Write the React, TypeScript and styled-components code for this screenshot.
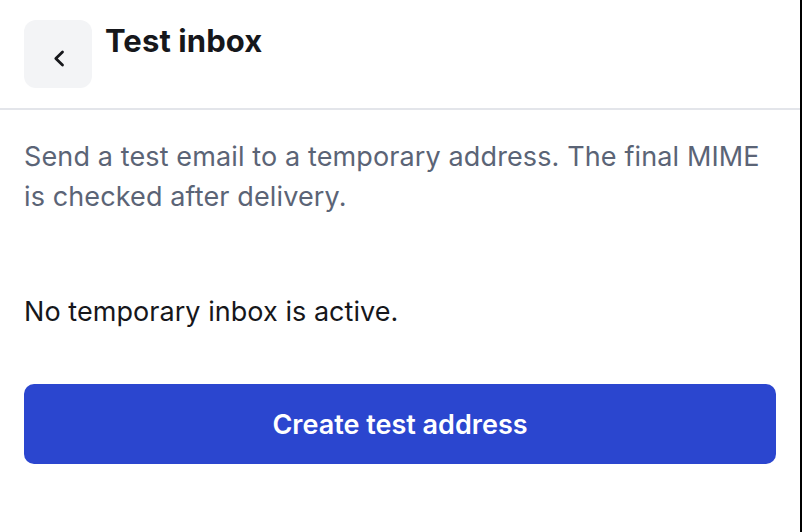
import React from 'react';
import styled, { createGlobalStyle } from 'styled-components';

const GlobalStyle = createGlobalStyle`
  html, body {
    margin: 0;
    padding: 0;
    background: #fff;
  }
  body {
    font-family: Inter, "Noto Sans", "Liberation Sans", sans-serif;
    -webkit-font-smoothing: antialiased;
  }
`;

const Screen = styled.div`
  width: 800px;
  height: 532px;
  border-right: 2px solid #000;
  background: #fff;
  display: flex;
  flex-direction: column;
`;

const Header = styled.header`
  display: flex;
  align-items: flex-start;
  gap: 13px;
  padding: 20px 24px;
  border-bottom: 2px solid #e3e5ea;
`;

const BackButton = styled.button`
  width: 68px;
  height: 68px;
  flex-shrink: 0;
  border: none;
  border-radius: 12px;
  background: #f3f4f6;
  display: flex;
  align-items: center;
  justify-content: center;
  padding: 9px 0 0 1px;
  cursor: pointer;
`;

const Title = styled.h1`
  margin: 0;
  padding-top: 2px;
  font-size: 31px;
  line-height: 38px;
  font-weight: 700;
  color: #16171b;
  letter-spacing: 0.1px;
`;

const Body = styled.main`
  display: flex;
  flex-direction: column;
  padding: 27px 24px 0;
`;

const Text = styled.p<{ $muted?: boolean }>`
  margin: 0;
  font-size: 27px;
  line-height: 40px;
  letter-spacing: 0.12px;
  color: ${p => (p.$muted ? '#5b6476' : '#16171b')};
`;

const Status = styled(Text)`
  margin-top: 75px;
  letter-spacing: 0.05px;
`;

const PrimaryButton = styled.button`
  margin-top: 52px;
  height: 80px;
  width: 100%;
  border: none;
  border-radius: 10px;
  background: #2b46cf;
  color: #fff;
  font-family: inherit;
  font-size: 27px;
  font-weight: 600;
  cursor: pointer;
`;

export default function App() {
  return (
    <>
      <GlobalStyle />
      <Screen>
        <Header>
          <BackButton aria-label="Back">
            <svg width="14" height="19" viewBox="0 0 14 19" fill="none">
              <path d="M10.5 3 L3.8 9.5 L10.5 16" stroke="#16171b" strokeWidth="2.8" strokeLinecap="round" strokeLinejoin="round" />
            </svg>
          </BackButton>
          <Title>Test inbox</Title>
        </Header>
        <Body>
          <Text $muted>
            Send a test email to a temporary address. The final MIME is checked after delivery.
          </Text>
          <Status>No temporary inbox is active.</Status>
          <PrimaryButton>Create test address</PrimaryButton>
        </Body>
      </Screen>
    </>
  );
}
